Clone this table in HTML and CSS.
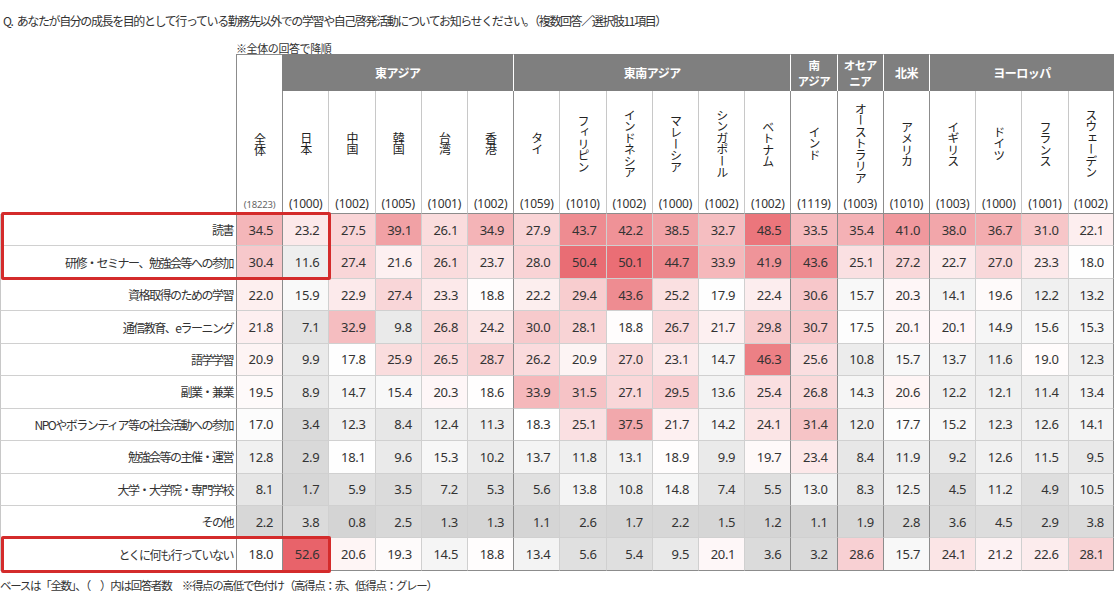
FILE: index.html
```html
<!DOCTYPE html>
<html lang="ja">
<head>
<meta charset="utf-8">
<title>勤務先以外での学習や自己啓発活動</title>
<link rel="stylesheet" href="styles.css">
</head>
<body>
<div class="page">
  <p class="title">Q. あなたが自分の成長を目的として行っている勤務先以外での学習や自己啓発活動についてお知らせください。（複数回答／選択肢11項目）</p>
  <p class="sort-note">※全体の回答で降順</p>
  <div class="chart">
    <table class="grid">
      <colgroup>
        <col class="c-label">
        <col span="19">
      </colgroup>
      <thead>
        <tr class="r-group">
          <th class="blank" rowspan="2"></th>
          <th class="country total gs" rowspan="2">
            <div class="cbox"><span class="cname">全体</span><span class="cnt cnt-small">(18223)</span></div>
          </th>
          <th class="grp" colspan="5">東アジア</th>
          <th class="grp gsep" colspan="6">東南アジア</th>
          <th class="grp gsep two">南<br>アジア</th>
          <th class="grp gsep two">オセア<br>ニア</th>
          <th class="grp gsep">北米</th>
          <th class="grp gsep" colspan="4">ヨーロッパ</th>
        </tr>
        <tr class="r-country">
          <th class="country gs"><div class="cbox"><span class="cname">日本</span><span class="cnt">(1000)</span></div></th>
          <th class="country"><div class="cbox"><span class="cname">中国</span><span class="cnt">(1002)</span></div></th>
          <th class="country"><div class="cbox"><span class="cname">韓国</span><span class="cnt">(1005)</span></div></th>
          <th class="country"><div class="cbox"><span class="cname">台湾</span><span class="cnt">(1001)</span></div></th>
          <th class="country"><div class="cbox"><span class="cname">香港</span><span class="cnt">(1002)</span></div></th>
          <th class="country gs"><div class="cbox"><span class="cname">タイ</span><span class="cnt">(1059)</span></div></th>
          <th class="country"><div class="cbox"><span class="cname">フィリピン</span><span class="cnt">(1010)</span></div></th>
          <th class="country"><div class="cbox"><span class="cname">インドネシア</span><span class="cnt">(1002)</span></div></th>
          <th class="country"><div class="cbox"><span class="cname">マレーシア</span><span class="cnt">(1000)</span></div></th>
          <th class="country"><div class="cbox"><span class="cname">シンガポール</span><span class="cnt">(1002)</span></div></th>
          <th class="country"><div class="cbox"><span class="cname">ベトナム</span><span class="cnt">(1002)</span></div></th>
          <th class="country gs"><div class="cbox"><span class="cname">インド</span><span class="cnt">(1119)</span></div></th>
          <th class="country gs"><div class="cbox"><span class="cname">オーストラリア</span><span class="cnt">(1003)</span></div></th>
          <th class="country gs"><div class="cbox"><span class="cname">アメリカ</span><span class="cnt">(1010)</span></div></th>
          <th class="country gs"><div class="cbox"><span class="cname">イギリス</span><span class="cnt">(1003)</span></div></th>
          <th class="country"><div class="cbox"><span class="cname">ドイツ</span><span class="cnt">(1000)</span></div></th>
          <th class="country"><div class="cbox"><span class="cname">フランス</span><span class="cnt">(1001)</span></div></th>
          <th class="country last"><div class="cbox"><span class="cname">スウェーデン</span><span class="cnt">(1002)</span></div></th>
        </tr>
      </thead>
      <tbody id="rows"></tbody>
    </table>
    <div class="mark mark-top"></div>
    <div class="mark mark-bottom"></div>
  </div>
  <p class="foot">ベースは「全数」、（　）内は回答者数　※得点の高低で色付け（高得点：赤、低得点：グレー）</p>
</div>
<script src="script.js"></script>
</body>
</html>
```

FILE: styles.css
```css
* { box-sizing: border-box; }

html, body {
  margin: 0;
  padding: 0;
  background: #ffffff;
}

body {
  width: 1115px;
  height: 597px;
  overflow: hidden;
  font-family: "Noto Sans CJK JP", "Noto Sans", sans-serif;
  color: #333333;
}

.page {
  display: flex;
  flex-direction: column;
}

.title {
  margin: 0;
  padding: 14px 0 0 3px;
  font-size: 12px;
  line-height: 14px;
  letter-spacing: -1.4px;
  word-spacing: 3px;
  white-space: nowrap;
  color: #333333;
}

.sort-note {
  margin: 14px 0 0 236px;
  font-size: 11px;
  line-height: 12px;
  letter-spacing: -0.4px;
  color: #333333;
}

.chart {
  position: relative;
  width: 1115px;
}

.grid {
  width: 1114px;
  table-layout: fixed;
  border-collapse: separate;
  border-spacing: 0;
}

.c-label { width: 236px; }

.grid th, .grid td {
  padding: 0;
  font-weight: normal;
}

/* header: group row */
.r-group { height: 37px; }

.blank {
  border: none;
  background: #ffffff;
}

.grp {
  background: #7f7f7f;
  color: #ffffff;
  font-weight: bold !important;
  font-size: 12px;
  line-height: 16px;
  letter-spacing: -0.5px;
  text-align: center;
  vertical-align: middle;
  border-top: 1px solid #7f7f7f;
}

.grp.gsep { border-left: 1px solid #ffffff; }

.grp.two {
  font-size: 11.5px;
  line-height: 16px;
}

/* header: country row */
.r-country { height: 122px; }

.country {
  background: #ffffff;
  border-left: 1px solid #c8c8c8;
  border-bottom: 1px solid #8c8c8c;
  vertical-align: top;
}

.country.gs { border-left-color: #8c8c8c; }
.country.last { border-right: 1px solid #8c8c8c; }

.country.total {
  border-top: 1px solid #8c8c8c;
}

.cbox {
  display: flex;
  flex-direction: column;
  align-items: center;
  height: 121px;
}

.total .cbox { height: 158px; padding-top: 37px; }

.cname {
  flex: 1;
  display: flex;
  align-items: center;
  justify-content: center;
  writing-mode: vertical-rl;
  font-size: 12px;
  line-height: 14px;
  color: #222222;
  letter-spacing: -0.5px;
}

.cnt {
  font-family: "Noto Sans", sans-serif;
  font-size: 12px;
  line-height: 16px;
  height: 16px;
  color: #333333;
  letter-spacing: -0.2px;
}

.cnt-small {
  font-size: 9.5px;
  color: #666666;
}

/* body rows */
.grid tbody tr { height: 32.45px; }

.label {
  text-align: right;
  padding-right: 3px !important;
  font-size: 12px;
  letter-spacing: -1.5px;
  color: #333333;
  border-left: 1px solid #c8c8c8;
  border-bottom: 1px solid #d0d0d0;
  white-space: nowrap;
  vertical-align: middle;
}

.val {
  font-family: "Noto Sans", sans-serif;
  font-size: 13px;
  letter-spacing: -0.3px;
  text-align: right;
  padding-right: 9px !important;
  color: #333333;
  border-left: 1px solid #d0d0d0;
  border-bottom: 1px solid #d0d0d0;
  vertical-align: middle;
}

.val.gs { border-left-color: #8c8c8c; }
.val.last { border-right: 1px solid #8c8c8c; }
.grid tbody tr:last-child .val { border-bottom-color: #8c8c8c; }

/* highlight boxes laid over the table */
.mark {
  position: absolute;
  left: 1px;
  width: 330px;
  border: 3px solid #d42b2b;
  border-radius: 2px;
  pointer-events: none;
}

.mark-top { top: 158px; height: 68px; }
.mark-bottom { top: 482px; height: 37px; }

.foot {
  margin: 7px 0 0 0;
  font-size: 11.5px;
  line-height: 14px;
  letter-spacing: -1.3px;
  white-space: nowrap;
  color: #333333;
}
```

FILE: script.js
```js
(function () {
  var rows = [
    ["読書", [34.5, 23.2, 27.5, 39.1, 26.1, 34.9, 27.9, 43.7, 42.2, 38.5, 32.7, 48.5, 33.5, 35.4, 41.0, 38.0, 36.7, 31.0, 22.1]],
    ["研修・セミナー、勉強会等への参加", [30.4, 11.6, 27.4, 21.6, 26.1, 23.7, 28.0, 50.4, 50.1, 44.7, 33.9, 41.9, 43.6, 25.1, 27.2, 22.7, 27.0, 23.3, 18.0]],
    ["資格取得のための学習", [22.0, 15.9, 22.9, 27.4, 23.3, 18.8, 22.2, 29.4, 43.6, 25.2, 17.9, 22.4, 30.6, 15.7, 20.3, 14.1, 19.6, 12.2, 13.2]],
    ["通信教育、eラーニング", [21.8, 7.1, 32.9, 9.8, 26.8, 24.2, 30.0, 28.1, 18.8, 26.7, 21.7, 29.8, 30.7, 17.5, 20.1, 20.1, 14.9, 15.6, 15.3]],
    ["語学学習", [20.9, 9.9, 17.8, 25.9, 26.5, 28.7, 26.2, 20.9, 27.0, 23.1, 14.7, 46.3, 25.6, 10.8, 15.7, 13.7, 11.6, 19.0, 12.3]],
    ["副業・兼業", [19.5, 8.9, 14.7, 15.4, 20.3, 18.6, 33.9, 31.5, 27.1, 29.5, 13.6, 25.4, 26.8, 14.3, 20.6, 12.2, 12.1, 11.4, 13.4]],
    ["NPOやボランティア等の社会活動への参加", [17.0, 3.4, 12.3, 8.4, 12.4, 11.3, 18.3, 25.1, 37.5, 21.7, 14.2, 24.1, 31.4, 12.0, 17.7, 15.2, 12.3, 12.6, 14.1]],
    ["勉強会等の主催・運営", [12.8, 2.9, 18.1, 9.6, 15.3, 10.2, 13.7, 11.8, 13.1, 18.9, 9.9, 19.7, 23.4, 8.4, 11.9, 9.2, 12.6, 11.5, 9.5]],
    ["大学・大学院・専門学校", [8.1, 1.7, 5.9, 3.5, 7.2, 5.3, 5.6, 13.8, 10.8, 14.8, 7.4, 5.5, 13.0, 8.3, 12.5, 4.5, 11.2, 4.9, 10.5]],
    ["その他", [2.2, 3.8, 0.8, 2.5, 1.3, 1.3, 1.1, 2.6, 1.7, 2.2, 1.5, 1.2, 1.1, 1.9, 2.8, 3.6, 4.5, 2.9, 3.8]],
    ["とくに何も行っていない", [18.0, 52.6, 20.6, 19.3, 14.5, 18.8, 13.4, 5.6, 5.4, 9.5, 20.1, 3.6, 3.2, 28.6, 15.7, 24.1, 21.2, 22.6, 28.1]]
  ];
  var MIN = 0.8, MID = 18.4, MAX = 52.6;
  var GRAY = [212, 212, 212], RED = [232, 99, 106];
  function color(v) {
    var t, base;
    if (v <= MID) { t = (MID - v) / (MID - MIN); base = GRAY; }
    else { t = (v - MID) / (MAX - MID); base = RED; }
    if (t > 1) t = 1;
    var c = base.map(function (b) { return Math.round(255 + (b - 255) * t); });
    return "rgb(" + c.join(",") + ")";
  }
  var groupStart = { 0: 1, 1: 1, 6: 1, 12: 1, 13: 1, 14: 1, 15: 1 };
  var tbody = document.getElementById("rows");
  rows.forEach(function (r) {
    var tr = document.createElement("tr");
    var th = document.createElement("th");
    th.className = "label";
    th.textContent = r[0];
    tr.appendChild(th);
    r[1].forEach(function (v, i) {
      var td = document.createElement("td");
      var cls = "val";
      if (groupStart[i]) cls += " gs";
      if (i === r[1].length - 1) cls += " last";
      td.className = cls;
      td.textContent = v.toFixed(1);
      td.style.background = color(v);
      tr.appendChild(td);
    });
    tbody.appendChild(tr);
  });
})();
```
